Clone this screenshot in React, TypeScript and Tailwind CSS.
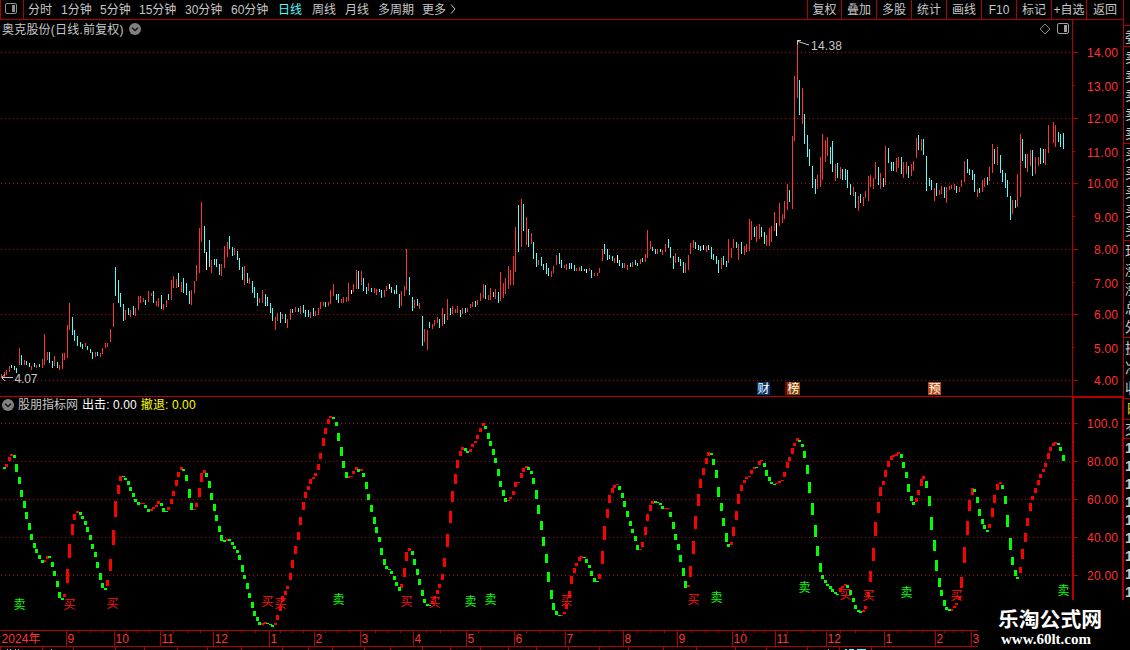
import React from "react";

/* Samples are grouped in tiles. Inside a tile the values are [x, top, bottom]
   triplets measured in thirds of a pixel from the tile origin. */
type Tile = { ox: number; oy: number; up: string; down: string; flat?: string };

const priceTiles: Tile[] = [
  {
    ox: 0,
    oy: 200,
    up: "4 522 531 13 516 531 19 510 525 28 498 516 58 444 495 73 480 495 94 498 510 109 495 504 127 477 504 133 402 495 142 456 480 163 468 498 178 495 510 187 459 507 193 459 480 202 375 474 208 309 390 256 429 441 286 456 471 301 459 471 307 444 462 316 429 444 322 429 441 331 387 426 340 309 381 376 330 360 391 330 351 406 324 348 415 288 330 421 288 309 430 294 306 445 273 306 454 279 288 469 303 318 475 294 321 490 312 330 499 300 321 514 240 300 520 228 264 529 237 264 544 246 276 574 270 315 583 243 279 589 195 243 598 84 219 604 6 126 634 180 219 664 192 228 673 138 204 682 126 171 703 144 165 733 198 255 748 234 252 778 294 309 787 270 309 826 351 390 832 339 363 847 342 357 862 357 384",
    down: "34 495 504 43 498 510 49 504 519 64 465 495 79 483 495 88 489 501 103 489 501 118 492 501 148 456 489 157 483 504 172 486 504 217 351 405 223 390 423 232 408 438 241 426 441 247 432 447 262 438 450 271 447 459 277 456 477 292 456 468 346 201 288 355 240 309 361 279 321 370 312 363 385 324 345 400 318 345 436 300 315 460 273 309 484 285 327 505 282 300 535 219 261 550 234 279 559 249 285 568 273 312 613 78 159 628 120 201 643 177 195 649 177 201 658 192 225 688 108 147 697 141 168 712 153 180 718 174 210 727 201 240 742 219 249 757 243 279 763 261 294 772 279 318 796 282 318 802 291 318 811 309 339 817 324 363 841 336 369 856 342 369",
    flat: "619 156 210",
  },
  {
    ox: 280,
    oy: 200,
    up: "31 327 360 46 321 336 61 318 342 91 336 354 106 333 348 115 324 345 121 306 327 130 306 318 145 306 318 151 270 312 160 252 288 184 297 309 190 291 309 199 291 306 205 249 303 220 252 276 229 210 267 244 213 255 265 249 273 283 264 279 289 267 285 313 270 291 319 258 273 364 273 318 373 258 288 379 147 270 403 300 324 418 309 327 433 387 426 442 390 450 457 372 387 463 360 378 472 351 369 487 324 378 502 297 360 517 318 342 526 327 339 532 318 339 547 324 342 562 324 336 571 312 324 577 306 321 592 300 315 601 279 303 610 252 294 625 285 300 631 264 300 646 267 297 661 216 303 670 249 294 676 234 282 685 198 267 691 210 255 700 168 255 706 81 216 724 -3 141 739 51 135 754 99 132 775 180 195 814 213 231 820 198 219 829 165 195 853 195 204 859 192 210",
    down: "37 327 339 55 324 336 70 315 339 76 330 351 85 330 351 100 324 348 136 306 321 169 282 300 175 282 309 235 213 267 250 234 273 259 261 282 274 264 276 298 267 276 304 270 294 334 261 279 343 270 282 349 255 282 358 282 324 388 231 285 397 291 333 412 297 318 427 348 438 448 366 384 478 357 384 493 342 372 511 324 345 541 330 351 556 324 339 586 303 321 616 255 297 640 276 291 655 276 309 715 15 156 730 12 93 745 87 141 760 126 177 769 159 201 784 171 198 790 192 210 799 189 222 805 204 228 838 159 192 844 180 204 868 189 207",
    flat: "214 270 282 328 252 267",
  },
  {
    ox: 560,
    oy: 200,
    up: "19 192 210 49 204 213 58 201 213 88 204 213 103 219 228 112 219 228 118 204 219 127 147 183 163 174 189 193 189 204 202 195 210 217 186 201 241 177 192 256 162 186 262 90 174 271 123 147 292 147 162 307 150 165 316 132 156 346 159 189 376 189 219 385 165 210 391 129 162 400 120 144 439 138 156 484 174 207 505 117 189 514 144 174 520 117 144 535 132 180 553 138 165 559 132 156 568 57 153 574 63 120 589 78 126 598 72 117 619 105 138 628 84 138 634 78 126 643 36 93 658 9 78 667 42 69 673 3 57",
    down: "34 189 207 43 195 213 64 198 213 73 207 213 94 210 234 133 132 162 142 147 180 148 165 177 157 168 183 178 180 198 187 189 204 211 189 201 226 180 195 232 189 198 247 174 186 277 141 153 286 147 162 301 147 156 325 117 144 331 141 174 340 168 207 355 171 186 361 177 198 370 186 219 406 126 147 415 135 150 421 138 153 445 135 150 454 141 177 460 162 180 469 168 192 475 180 219 490 168 195 499 183 201 529 126 144 544 126 162 583 81 111 604 81 111 613 96 132",
    flat: "79 207 219 172 165 189 430 135 150 649 69 108",
  },
  {
    ox: 780,
    oy: 0,
    up: "22 552 630 37 408 627 43 228 423 52 120 294 67 264 372 112 525 567 121 471 561 127 402 540 136 420 486 142 411 468 166 492 543 181 501 537",
    down: "28 570 606 58 240 345 73 342 432 82 405 471 88 447 498 97 498 564 106 537 582 151 441 492 157 423 516 172 489 534 187 507 540",
  },
  {
    ox: 840,
    oy: 100,
    up: "40 261 288 55 288 333 70 291 318 76 273 294 85 228 303 91 225 261 100 234 267 106 186 237 121 219 267 136 138 255 169 174 216 175 171 204 190 186 234 199 186 222 214 192 228 220 183 213 229 114 174 244 117 153 283 264 303 298 270 285 304 258 282 319 261 309 328 258 270 334 255 267 343 252 270 358 261 276 364 240 261 373 183 246 412 267 291 427 240 276 433 234 261 448 201 243 457 132 219 472 141 195 517 300 342 532 222 321 541 102 291 562 162 216 571 150 198 586 171 222 595 171 198 616 147 195 625 75 159 640 66 129 646 75 141",
    down: "16 207 240 22 210 264 31 252 285 46 276 324 61 282 309 115 201 255 130 234 261 145 144 189 154 186 213 160 186 213 184 171 222 205 198 234 235 105 150 250 117 165 259 168 273 268 234 258 274 240 270 289 249 288 313 261 294 349 258 279 382 177 219 388 207 225 397 210 240 403 222 276 418 264 279 442 231 255 463 147 192 481 165 219 487 210 246 496 219 264 502 240 291 511 288 360 526 300 324 547 117 183 556 162 204 577 150 228 601 144 192 610 147 189 655 96 126 661 102 141 670 99 147",
  },
];

const waveTiles: Tile[] = [
  {
    ox: 0,
    oy: 396,
    up: "19 204 213 28 183 195 34 174 180 133 492 498 142 480 489 193 594 603 202 519 561 208 444 486 217 384 417 223 354 372 232 345 351 322 552 570 331 489 525 340 402 447 346 315 363 355 267 294 361 240 255 421 321 324 430 321 324 454 339 345 460 333 339 469 327 333 475 315 324 505 333 342 514 309 324 520 285 300 529 252 270 535 228 243 544 213 222 583 339 342 589 321 333 598 276 303 604 231 258 613 222 231 682 429 435 787 681 687 796 678 684 826 681 687 832 657 672 841 630 645 847 600 618 856 585 597 862 570 579",
    down: "13 213 219 43 177 186 49 204 228 58 243 264 64 282 303 73 315 336 79 348 369 88 381 402 94 414 432 103 441 456 109 459 471 118 477 489 127 492 501 148 480 486 157 498 513 163 525 540 172 555 573 178 588 606 187 606 612 241 348 357 247 360 369 256 375 387 262 393 408 271 417 432 277 444 459 286 468 483 292 498 516 301 531 552 307 561 576 316 576 582 370 240 243 376 246 252 385 255 267 391 273 285 400 291 303 406 309 318 415 318 327 436 327 336 445 339 348 484 321 330 490 336 348 499 345 348 550 219 225 559 237 255 568 279 306 574 321 342 619 231 243 628 255 276 634 291 312 643 324 345 649 357 375 658 390 408 664 417 435 673 432 438 688 429 435 697 438 447 703 450 459 712 462 471 718 477 492 727 507 528 733 537 549 742 561 579 748 591 606 757 618 636 763 645 660 772 663 675 778 678 687 802 681 684 811 684 687 817 687 693",
  },
  {
    ox: 280,
    oy: 396,
    up: "31 531 552 37 492 516 46 450 474 55 408 432 61 363 387 70 318 342 76 288 306 85 270 282 91 249 264 100 243 249 106 231 240 115 204 222 121 171 189 130 126 150 136 96 114 145 69 84 151 60 66 205 240 246 214 240 243 220 225 234 229 213 222 244 219 225 364 564 576 373 516 543 379 468 495 388 456 465 457 615 624 463 600 609 472 582 594 478 564 576 487 534 552 493 486 513 502 414 453 511 345 381 517 285 318 526 234 264 532 192 216 541 165 180 547 153 162 571 159 168 577 144 153 586 135 141 592 117 129 601 96 108 610 81 90 685 312 315 691 303 309 700 285 297 706 258 273 715 258 261 724 231 246 730 216 228 739 210 216 844 657 660 853 648 654 859 624 639 868 585 606",
    down: "160 63 69 169 78 90 175 111 135 184 153 180 190 195 216 199 228 246 235 219 228 250 231 243 259 258 279 265 294 312 274 327 348 283 363 384 289 393 411 298 423 438 304 456 477 313 489 507 319 510 519 328 519 522 334 525 534 343 540 552 349 558 570 358 573 585 397 465 477 403 489 507 412 519 537 418 549 567 427 582 600 433 609 621 442 624 630 448 627 630 556 156 165 562 165 171 616 90 99 625 111 129 631 135 150 640 159 177 646 186 201 655 219 240 661 255 273 670 282 300 676 306 318 745 213 222 754 225 234 760 246 264 769 282 309 775 327 354 784 375 402 790 423 450 799 474 501 805 528 558 814 582 609 820 621 642 829 645 657 838 657 660",
  },
  {
    ox: 560,
    oy: 396,
    up: "34 540 564 43 516 531 49 501 510 58 483 495 64 480 486 118 534 549 127 465 504 133 390 432 142 339 366 148 297 321 157 276 291 163 267 276 172 264 267 241 459 462 247 438 453 256 393 417 262 354 375 271 327 345 277 315 324 316 336 339 325 336 339 385 567 573 391 510 543 400 435 474 406 360 399 415 294 330 421 249 276 430 216 237 439 186 204 445 168 180 514 438 447 520 393 420 529 345 372 535 294 324 544 267 285 553 252 261 559 243 249 568 240 243 574 222 234 583 213 219 598 195 207 604 192 195 649 261 264 658 255 261 667 252 255 673 228 243 682 198 216 688 183 195 697 156 174 703 141 150 712 126 135 841 576 588 847 570 576",
    down: "73 483 486 79 489 501 88 507 516 94 525 540 103 546 558 112 555 558 178 270 282 187 291 306 193 315 333 202 345 363 211 375 390 217 399 411 226 420 435 232 447 462 286 315 321 292 318 321 301 321 327 307 330 339 331 348 363 340 378 399 346 414 432 355 444 462 361 477 498 370 516 540 376 555 576 454 171 177 460 189 207 469 222 246 475 273 303 484 321 345 490 366 390 499 411 438 505 444 453 589 213 216 613 201 213 619 222 240 628 243 255 634 258 264 643 264 267 718 132 138 727 144 153 733 165 186 742 207 234 748 258 291 757 321 357 766 387 423 772 450 480 781 501 528 787 537 549 796 552 561 802 564 570 811 570 579 817 579 588 826 588 594 832 594 597",
  },
  {
    ox: 840,
    oy: 396,
    up: "16 564 570 70 642 648 76 630 639 85 588 600 91 525 558 100 456 495 106 378 420 115 318 351 121 273 300 130 255 267 136 222 243 145 195 213 154 180 192 160 177 183 169 174 180 175 168 174 229 306 318 235 282 297 244 249 270 250 240 249 334 639 645 343 630 636 349 621 627 358 600 612 364 543 576 373 453 501 382 375 417 388 312 345 397 276 297 448 384 396 457 336 363 463 297 321 472 264 282 481 258 264 541 513 531 547 459 489 556 411 438 562 366 390 571 321 345 577 300 312 586 276 291 595 252 267 601 234 246 610 219 228 616 201 213 625 171 189 631 153 165 640 141 150 646 138 144",
    down: "22 567 576 31 582 597 40 606 618 46 627 639 55 642 648 61 645 651 184 174 186 190 198 216 199 228 246 205 264 288 214 300 315 220 318 327 259 255 276 268 300 330 274 363 402 283 432 465 289 492 525 298 546 573 304 582 600 313 612 630 319 633 642 328 639 645 403 279 288 412 303 321 418 339 360 427 369 384 433 387 399 442 402 408 487 267 279 496 300 324 502 357 393 511 426 462 517 483 507 526 522 540 532 543 549 655 141 147 661 153 165 670 177 195",
  },
];

function barsPath(src: string | undefined, ox: number, oy: number, lead: number, width: number) {
  if (!src) return "";
  const n = src.split(" ").map(Number);
  let d = "";
  for (let i = 0; i + 2 < n.length; i += 3) {
    const x = ox + Math.floor(n[i] / 3) - lead;
    const top = oy + Math.round(n[i + 1] / 3);
    const bottom = oy + Math.round(n[i + 2] / 3);
    d += `M${x} ${top}h${width}V${bottom}h${-width}z`;
  }
  return d;
}

const Bars = ({ tiles, lead, width, up, down }: { tiles: Tile[]; lead: number; width: number; up: string; down: string }) => (
  <g shapeRendering="crispEdges">
    {tiles.map((t, i) => (
      <g key={i}>
        <path fill={up} d={barsPath(t.up, t.ox, t.oy, lead, width)} />
        <path fill={down} d={barsPath(t.down, t.ox, t.oy, lead, width)} />
        <path fill="#ffffff" d={barsPath(t.flat, t.ox, t.oy, lead, width)} />
      </g>
    ))}
  </g>
);

const Grid = ({ rows }: { rows: number[] }) => (
  <g stroke="#b00808" strokeDasharray="1 3" shapeRendering="crispEdges">
    {rows.map((y) => (
      <line key={y} x1="1" x2="1072" y1={y + 0.5} y2={y + 0.5} />
    ))}
  </g>
);

const periods: [string, string][] = [
  ["分时", "w-[33px]"],
  ["1分钟", "w-[39px]"],
  ["5分钟", "w-[39px]"],
  ["15分钟", "w-[46px]"],
  ["30分钟", "w-[46px]"],
  ["60分钟", "w-[47px]"],
  ["日线", "w-[34px] text-[#54fcfc]"],
  ["周线", "w-[33px]"],
  ["月线", "w-[33px]"],
  ["多周期", "w-[44px]"],
  ["更多", "w-[27px]"],
];

const actions: [string, string][] = [
  ["复权", "w-[34px]"],
  ["叠加", "w-[35px]"],
  ["多股", "w-[35px]"],
  ["统计", "w-[35px]"],
  ["画线", "w-[35px]"],
  ["F10", "w-[35px]"],
  ["标记", "w-[35px]"],
  ["+自选", "w-[35px]"],
  ["返回", "w-[37px]"],
];

const priceMarks: [string, number][] = [
  ["14.00", 52], ["13.00", 86], ["12.00", 118], ["11.00", 152], ["10.00", 183], ["9.00", 217],
  ["8.00", 249], ["7.00", 283], ["6.00", 314], ["5.00", 348], ["4.00", 380],
];
const waveMarks: [string, number][] = [
  ["100.0", 423], ["80.00", 461], ["60.00", 499], ["40.00", 537], ["20.00", 575],
];

const buys = [[69, 604], [112, 603], [267, 601], [280, 603], [406, 601], [434, 602], [566, 600], [693, 599], [845, 594], [868, 595], [956, 595]];
const sells = [[19, 604], [338, 599], [470, 601], [490, 599], [716, 597], [804, 587], [906, 592], [1063, 590]];

const months: [number, string][] = [
  [66, "9"], [114, "10"], [160, "11"], [213, "12"], [269, "1"], [314, "2"], [360, "3"], [413, "4"],
  [466, "5"], [514, "6"], [565, "7"], [623, "8"], [677, "9"], [732, "10"], [775, "11"], [826, "12"],
  [884, "1"], [935, "2"], [971, "3"],
];
const weekTicks = [78, 90, 102, 126, 137, 149, 173, 187, 200, 227, 241, 255, 280, 292, 303, 325, 337, 349, 375, 387, 400, 426, 440, 453, 478, 490, 502, 526, 539, 553, 580, 594, 609, 637, 650, 664, 691, 705, 718, 743, 754, 764, 787, 801, 813, 840, 855, 870, 897, 910, 922, 944, 953, 962];
const footTicks = [0, 42, 73, 115, 144, 177, 207, 241, 282, 308, 332, 364, 390, 422, 450, 480, 508, 536, 568, 599, 628, 663, 696, 735, 766, 807, 839, 871];

const PanelIcon = ({ className }: { className: string }) => (
  <svg width="13" height="12" viewBox="0 0 13 12" className={className}>
    <rect x="0.5" y="0.5" width="11" height="10" rx="1.5" fill="none" stroke="currentColor" />
    <rect x="7" y="2" width="3" height="7" fill="currentColor" />
  </svg>
);

const Chevron = () => (
  <svg width="12" height="12" viewBox="0 0 12 12">
    <circle cx="6" cy="6" r="6" fill="#808080" />
    <path d="M3 4.8 6 7.6 9 4.8" fill="none" stroke="#101010" strokeWidth="1.3" />
  </svg>
);

const quoteGroups: [string[], string][] = [
  [["委"], "h-[19px] pt-[1px]"],
  [["卖", "卖", "卖", "卖", "卖"], "h-[96px]"],
  [["买", "买", "买", "买", "买"], "h-[96px]"],
  [["现", "涨", "涨", "总", "外"], "h-[96px]"],
  [["换", "净", "收"], "h-[60px]"],
];

export default function App() {
  return (
    <div className="relative flex h-[650px] w-[1130px] overflow-hidden bg-black font-['Liberation_Sans','Noto_Sans_CJK_SC',sans-serif] text-[12px] leading-none text-[#c8c8c8]">
      <main className="flex w-[1123px] shrink-0 flex-col">
        <header className="flex h-5 shrink-0 items-stretch border-b border-[#b00000] whitespace-nowrap">
          <div className="mr-1 flex w-6 items-center border-x border-[#b00000] pb-px pl-1">
            <PanelIcon className="text-[#909090]" />
          </div>
          <nav className="flex items-center pt-px">
            {periods.map(([name, cls]) => (
              <span key={name} className={cls}>{name}</span>
            ))}
            <svg width="8" height="10" viewBox="0 0 8 10" fill="none" stroke="#c0c0c0" className="-mt-[3px]">
              <path d="M2 .5 6 5 2 9.5" />
            </svg>
          </nav>
          <div className="ml-auto flex">
            {actions.map(([name, cls]) => (
              <span key={name} className={`${cls} flex shrink-0 items-center justify-center border-l border-[#b00000] pt-px`}>
                {name}
              </span>
            ))}
          </div>
        </header>

        <div className="flex h-[610px] shrink-0">
          <section className="flex w-[1072px] shrink-0 flex-col">
            <div className="flex h-[18px] shrink-0 items-center pr-[2px] pl-[2px]">
              <span className="mr-[5px] pt-px tracking-[0.2px]">奥克股份(日线.前复权)</span>
              <Chevron />
              <svg width="12" height="12" viewBox="0 0 12 12" className="mr-[6px] ml-auto" fill="none" stroke="#808080">
                <path d="M6 1 11 6 6 11 1 6z" />
              </svg>
              <PanelIcon className="text-[#a0a0a0]" />
            </div>

            <svg width="1072" height="358" viewBox="0 38 1072 358" className="block shrink-0">
              <Grid rows={[52, 118, 183, 249, 314, 380]} />
              <Bars tiles={priceTiles} lead={0} width={1} up="#ff3232" down="#54fcfc" />
              <g fontSize="12" fill="#c8c8c8">
                <path d="M797 40.5h4M797.5 41v4M798 41.5 809 45" fill="none" stroke="#c8c8c8" />
                <text x="811" y="50" textLength="31">14.38</text>
                <path d="M2 377.5H13M5 374.5 1.5 377.5 5 381" fill="none" stroke="#c8c8c8" />
                <text x="14.5" y="383" textLength="23">4.07</text>
              </g>
              <g fontSize="12" fill="#ffffff">
                <rect x="757" y="382" width="13" height="13" fill="#003870" />
                <text x="757.5" y="393">财</text>
                <rect x="785" y="382" width="3" height="13" fill="#780000" />
                <rect x="787" y="382" width="13" height="13" fill="#8a4000" />
                <text x="787.5" y="393">榜</text>
                <rect x="928" y="382" width="13" height="13" fill="#b84a10" />
                <text x="928.5" y="393">预</text>
              </g>
            </svg>

            <div className="flex h-[17px] shrink-0 items-center gap-[5px] border-t border-[#c00000] pl-[2px]">
              <Chevron />
              <span className="-ml-[1px]">股朋指标网</span>
              <span className="-ml-px tracking-[0.1px] text-white">出击: 0.00</span>
              <span className="-ml-px tracking-[0.1px] text-[#ffff00]">撤退: 0.00</span>
            </div>

            <svg width="1072" height="217" viewBox="0 413 1072 217" className="block shrink-0">
              <Grid rows={[423, 461, 499, 537, 575]} />
              <Bars tiles={waveTiles} lead={1} width={3} up="#ff0000" down="#00ff00" />
              <g fontSize="12" textAnchor="middle">
                {buys.map(([x, y]) => (
                  <text key={x} x={x + 0.5} y={y + 4.5} fill="#ff1414">买</text>
                ))}
                {sells.map(([x, y]) => (
                  <text key={x} x={x + 0.5} y={y + 4.5} fill="#00ff00">卖</text>
                ))}
              </g>
            </svg>
          </section>

          <svg width="51" height="610" viewBox="1072 20 51 610" className="block shrink-0">
            <g fill="#b40000" shapeRendering="crispEdges">
              <rect x="1072" y="20" width="1" height="376" />
              <rect x="1072" y="396" width="51" height="2" />
              <rect x="1072" y="396" width="2" height="204" />
              <rect x="1122" y="396" width="1" height="204" />
              {[52, 118, 183, 249, 314, 380, 423, 461, 499, 537, 575].map((y) => (
                <rect key={y} x="1073" y={y} width="5" height="1" />
              ))}
              {[85, 151, 216, 282, 347, 442, 480, 518, 556].map((y) => (
                <rect key={y} x="1073" y={y} width="2" height="1" />
              ))}
            </g>
            <g fontSize="12" fill="#ff3232" textAnchor="end">
              {[...priceMarks, ...waveMarks].map(([t, y]) => (
                <text key={t} x="1118" y={y + 5} textLength={t.length === 5 ? 31 : 24}>{t}</text>
              ))}
            </g>
          </svg>
        </div>

        <svg width="979" height="20" viewBox="0 630 979 20" className="block shrink-0">
          <g fill="#b40000" shapeRendering="crispEdges">
            <rect x="0" y="630" width="978" height="1" />
            <rect x="0" y="646" width="978" height="1" />
            {months.map(([x]) => (
              <rect key={x} x={x} y="630" width="1" height="16" />
            ))}
            {weekTicks.map((x) => (
              <rect key={x} x={x} y="631" width="1" height="2" />
            ))}
            {footTicks.map((x) => (
              <rect key={x} x={x} y="647" width="1" height="3" />
            ))}
          </g>
          <g fontSize="12" fill="#ff3232">
            <text x="1.5" y="643" textLength="39">2024年</text>
            {months.map(([x, m]) => (
              <text key={x} x={x + 1.5} y="643">{m}</text>
            ))}
          </g>
          <path d="M7 649h1M10 649h1M15 649h1M18 649h1M51 649h1M828 649h1" stroke="#c0c0c0" transform="translate(0 .5)" />
          <path d="M845 649.5h2M849 649.5h5M857 649.5h9" stroke="#54fcfc" />
        </svg>
      </main>

      <aside className="flex h-[600px] w-[7px] shrink-0 flex-col overflow-hidden border-l border-[#b40000] text-[14px]">
        <div className="h-[26px] shrink-0 border-b border-[#b40000]" />
        {quoteGroups.map(([names, cls], i) => (
          <div key={i} className={`${cls} box-content shrink-0 flex flex-col justify-around overflow-hidden border-b border-[#b40000]`}>
            {names.map((n, k) => (
              <span key={k} className="w-4 pl-px">{n}</span>
            ))}
          </div>
        ))}
        <div className="flex h-[21px] shrink-0 items-center border-b border-[#b40000] pl-[3px] text-[#d8d800]">
          <span className="w-4 shrink-0">时</span>
        </div>
        <div className="flex h-[19px] shrink-0 items-center border-b border-[#b40000] pl-px">
          <span className="w-4 shrink-0">交</span>
        </div>
        {[0, 1, 2, 3, 4, 5, 6, 7, 8].map((n) => (
          <div key={n} className="flex h-[18px] shrink-0 items-center pl-px font-bold">
            <span className="w-4 shrink-0">1</span>
          </div>
        ))}
      </aside>

      <div className="absolute top-[600px] left-[979px] flex h-[50px] w-[151px] flex-col items-start bg-black pt-[8px] text-white">
        <span className="ml-[19px] font-['Noto_Sans_CJK_SC',sans-serif] text-[20.8px] leading-[21px] font-bold whitespace-nowrap">乐淘公式网</span>
        <span className="mt-[2px] ml-[22px] font-['Liberation_Serif',serif] text-[15px] leading-[17px] font-bold">www.60lt.com</span>
      </div>
    </div>
  );
}
